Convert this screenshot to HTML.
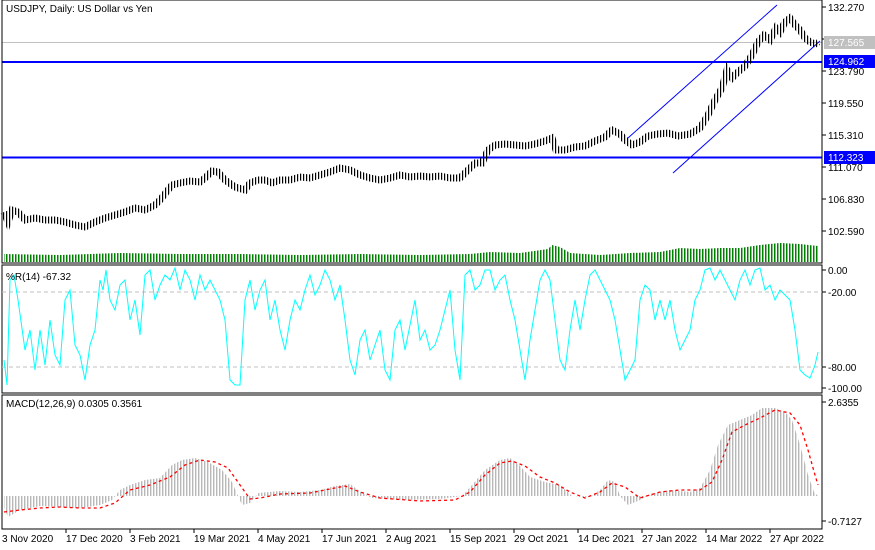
<!DOCTYPE html>
<html><head><meta charset="utf-8"><style>
body{margin:0;background:#fff;width:875px;height:550px;overflow:hidden}
svg{display:block}
text{font-family:"Liberation Sans",sans-serif;font-size:10px;fill:#000}
</style></head><body>
<svg width="875" height="550" viewBox="0 0 875 550">
<defs>
<pattern id="bars" width="3" height="10" patternUnits="userSpaceOnUse"><rect x="0" y="0" width="1.2" height="10" fill="#000"/></pattern>
<pattern id="vol" width="3" height="10" patternUnits="userSpaceOnUse"><rect x="0" y="0" width="1.5" height="10" fill="#008000"/></pattern>
<pattern id="hist" width="3" height="10" patternUnits="userSpaceOnUse"><rect x="0" y="0" width="1.4" height="10" fill="#b8b8b8"/></pattern>
</defs>
<rect width="875" height="550" fill="#fff"/>
<line x1="2" y1="42.5" x2="822" y2="42.5" stroke="#c0c0c0"/>
<line x1="2" y1="62" x2="822" y2="62" stroke="#0000ff" stroke-width="2"/>
<line x1="2" y1="157.5" x2="822" y2="157.5" stroke="#0000ff" stroke-width="2"/>
<line x1="628" y1="138" x2="777" y2="5" stroke="#0000ff" stroke-width="1"/>
<line x1="673" y1="173" x2="820" y2="41" stroke="#0000ff" stroke-width="1"/>
<polyline fill="none" stroke="url(#bars)" stroke-width="7" points="4,212 8,222 12,210 18,212 25,220 35,218 45,220 55,220 65,222 75,225 85,227 95,222 105,218 115,215 125,212 135,208 145,210 155,205 160,200 172,185 180,183 190,181 200,182 205,178 212,171 218,172 225,180 235,187 245,190 250,183 258,180 265,180 272,183 280,180 290,180 300,177 310,178 320,175 330,172 340,168 350,170 360,175 370,178 380,180 390,178 400,175 410,177 420,176 430,177 440,176 450,178 460,178 468,170 475,163 482,163 488,150 495,145 505,144 515,145 525,146 535,144 545,141 552,138 556,150 565,150 575,147 585,146 595,141 605,137 612,130 620,134 625,140 632,145 640,142 648,136 658,134 668,133 678,136 690,134 700,128 708,115 715,100 722,88 727,70 732,78 738,72 745,66 752,55 758,42 764,35 770,40 776,28 780,32 785,22 790,18 795,25 800,30 805,38 810,42 815,44 818,42"/>
<path fill="url(#vol)" d="M4,262 L4,254 L60,255 L120,253 L180,254 L240,254 L300,255 L360,254 L420,255 L470,254 L490,252 L520,253 L548,249 L552,245 L560,247 L570,253 L600,255 L630,253 L660,252 L680,248 L700,249 L720,248 L740,248 L760,245 L780,243 L800,244 L818,246 L818,262 Z"/>
<text x="6" y="12">USDJPY, Daily:  US Dollar vs Yen</text>
<rect x="2" y="0" width="820" height="263" fill="none" stroke="#000"/>
<rect x="2" y="265" width="820" height="128" fill="none" stroke="#000"/>
<rect x="2" y="395" width="820" height="134" fill="none" stroke="#000"/>
<line x1="2" y1="292" x2="822" y2="292" stroke="#c0c0c0" stroke-dasharray="4,3"/>
<line x1="2" y1="367" x2="822" y2="367" stroke="#c0c0c0" stroke-dasharray="4,3"/>
<polyline fill="none" stroke="#00ffff" stroke-width="1" points="4,360 7,385 10,280 14,275 18,300 25,350 30,330 35,370 40,330 45,365 50,320 55,355 60,365 65,300 70,290 75,345 80,355 85,380 90,345 95,330 100,280 103,290 106,270 110,300 115,310 120,285 125,280 130,320 135,300 140,335 145,275 150,270 155,300 160,285 165,275 170,280 175,268 180,290 185,270 190,280 195,300 200,275 205,290 210,280 215,290 220,300 225,320 230,380 235,385 240,385 245,300 250,280 255,310 260,290 265,280 270,320 275,300 280,330 285,350 290,320 295,300 300,310 305,290 310,275 315,295 320,285 325,270 330,280 335,300 340,285 345,320 350,360 355,375 360,340 365,330 370,360 375,345 380,330 385,370 390,380 395,330 400,320 405,350 410,325 415,300 420,340 425,330 430,350 435,345 440,330 445,310 450,290 455,350 460,380 465,275 470,270 475,290 480,285 485,270 490,270 495,290 500,280 505,275 510,300 515,320 520,350 525,380 530,340 535,310 540,280 545,270 550,280 555,320 560,360 565,370 570,330 575,300 580,330 585,300 590,275 595,270 600,280 605,290 610,300 615,320 620,350 625,380 630,370 635,360 640,300 645,285 650,290 655,320 660,300 665,320 670,300 675,330 680,350 685,340 690,330 695,300 700,290 705,270 710,268 715,280 720,270 725,280 730,290 735,300 740,280 745,270 750,285 755,270 760,268 765,290 770,285 775,300 780,290 785,295 790,300 795,330 800,370 805,375 810,378 815,365 818,352"/>
<text x="6" y="280">%R(14) -67.32</text>
<path fill="url(#hist)" d="M4,496 L4,508 L8,517 L20,510 L40,506 L60,507 L80,508 L100,505 L112,500 L120,490 L130,485 L145,480 L160,478 L172,465 L182,460 L195,458 L208,462 L222,470 L232,482 L238,496 L242,505 L250,503 L258,493 L280,491 L300,492 L320,490 L335,486 L350,484 L362,493 L372,498 L400,500 L440,499 L462,496 L472,485 L485,470 L500,460 L510,458 L520,466 L530,477 L545,482 L560,485 L572,496 L590,497 L600,490 L608,480 L615,482 L620,496 L628,505 L640,500 L650,494 L670,490 L690,492 L700,488 L710,470 L718,445 L728,425 L740,420 L752,415 L762,408 L775,408 L785,412 L792,420 L800,445 L808,475 L814,492 L818,496 Z"/>
<polyline fill="none" stroke="#ff0000" stroke-width="1.3" stroke-dasharray="3,3" points="4,512 20,510 40,508 60,507 80,508 100,508 115,503 130,490 150,485 170,477 185,465 200,460 215,462 228,468 240,485 250,499 260,498 280,494 310,493 330,489 345,486 360,492 380,498 420,501 455,500 470,492 485,475 500,463 512,461 525,466 540,477 555,483 570,492 585,498 600,492 612,483 625,487 640,498 660,492 680,490 700,490 712,482 722,460 732,432 745,425 760,418 775,410 790,413 800,425 808,450 815,475 818,485"/>
<text x="6" y="407">MACD(12,26,9) 0.0305 0.3561</text>
<g stroke="#000">
<line x1="822" y1="7" x2="826" y2="7"/><line x1="822" y1="39" x2="826" y2="39"/><line x1="822" y1="71" x2="826" y2="71"/><line x1="822" y1="103" x2="826" y2="103"/><line x1="822" y1="135" x2="826" y2="135"/><line x1="822" y1="167" x2="826" y2="167"/><line x1="822" y1="199" x2="826" y2="199"/><line x1="822" y1="231" x2="826" y2="231"/>
<line x1="822" y1="270" x2="826" y2="270"/><line x1="822" y1="292" x2="826" y2="292"/><line x1="822" y1="367" x2="826" y2="367"/><line x1="822" y1="388" x2="826" y2="388"/>
<line x1="822" y1="402" x2="826" y2="402"/><line x1="822" y1="521" x2="826" y2="521"/>
</g>
<text x="828" y="11">132.270</text>
<text x="828" y="43">128.030</text>
<rect x="824" y="36" width="51" height="13" fill="#c0c0c0"/><text x="828" y="46" style="fill:#fff">127.565</text>
<rect x="824" y="55" width="51" height="13" fill="#0000ff"/><text x="828" y="65" style="fill:#fff">124.962</text>
<text x="828" y="75">123.790</text>
<text x="828" y="107">119.550</text>
<text x="828" y="139">115.310</text>
<rect x="824" y="151" width="51" height="13" fill="#0000ff"/><text x="828" y="161" style="fill:#fff">112.323</text>
<text x="828" y="171">111.070</text>
<text x="828" y="203">106.830</text>
<text x="828" y="235">102.590</text>
<text x="828" y="274">0.00</text>
<text x="828" y="296">-20.00</text>
<text x="828" y="371">-80.00</text>
<text x="828" y="392">-100.00</text>
<text x="828" y="406">2.6355</text>
<text x="828" y="525">-0.7127</text>
<g stroke="#000"><line x1="66" y1="529" x2="66" y2="533"/><line x1="130" y1="529" x2="130" y2="533"/><line x1="194" y1="529" x2="194" y2="533"/><line x1="258" y1="529" x2="258" y2="533"/><line x1="322" y1="529" x2="322" y2="533"/><line x1="386" y1="529" x2="386" y2="533"/><line x1="450" y1="529" x2="450" y2="533"/><line x1="514" y1="529" x2="514" y2="533"/><line x1="578" y1="529" x2="578" y2="533"/><line x1="642" y1="529" x2="642" y2="533"/><line x1="706" y1="529" x2="706" y2="533"/><line x1="770" y1="529" x2="770" y2="533"/></g>
<text x="2" y="542">3 Nov 2020</text>
<text x="66" y="542">17 Dec 2020</text>
<text x="130" y="542">3 Feb 2021</text>
<text x="194" y="542">19 Mar 2021</text>
<text x="258" y="542">4 May 2021</text>
<text x="322" y="542">17 Jun 2021</text>
<text x="386" y="542">2 Aug 2021</text>
<text x="450" y="542">15 Sep 2021</text>
<text x="514" y="542">29 Oct 2021</text>
<text x="578" y="542">14 Dec 2021</text>
<text x="642" y="542">27 Jan 2022</text>
<text x="706" y="542">14 Mar 2022</text>
<text x="770" y="542">27 Apr 2022</text>
</svg>
</body></html>
